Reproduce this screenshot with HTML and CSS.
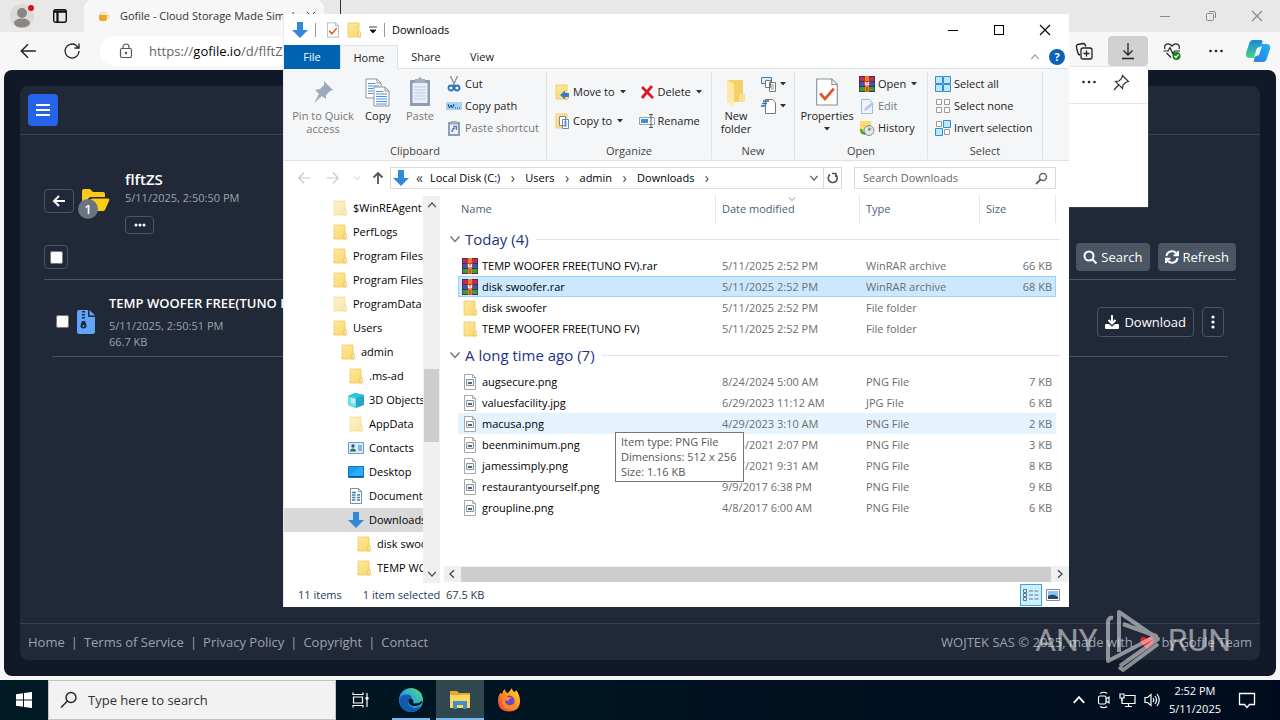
FILE: index.html
```html
<!DOCTYPE html>
<html lang="en">
<head>
<meta charset="utf-8">
<title>Gofile - Cloud Storage Made Simple</title>
<meta name="viewport" content="width=device-width, initial-scale=1">
<link rel="stylesheet" href="styles.css">
</head>
<body class="desktop">
<svg class="sprite" aria-hidden="true">
  <defs>
    <linearGradient id="g-folder" x1="0" y1="0" x2="1" y2="1"><stop offset="0" stop-color="#ffe9a2"/><stop offset="1" stop-color="#fbd566"/></linearGradient>
    <linearGradient id="g-edge" x1="0" y1="1" x2="1" y2="0"><stop offset="0" stop-color="#1464c0"/><stop offset=".5" stop-color="#2aa7dd"/><stop offset="1" stop-color="#5fdc6b"/></linearGradient>
    <linearGradient id="g-fox" x1="1" y1="0" x2="0" y2="1"><stop offset="0" stop-color="#ffe53b"/><stop offset=".5" stop-color="#ff8a1e"/><stop offset="1" stop-color="#f2304f"/></linearGradient>
    <linearGradient id="g-cop1" x1="0" y1="0" x2="0" y2="1"><stop offset="0" stop-color="#1c86dc"/><stop offset="1" stop-color="#42d68c"/></linearGradient>
    <linearGradient id="g-cop2" x1="0" y1="1" x2="1" y2="0"><stop offset="0" stop-color="#2b7de9"/><stop offset="1" stop-color="#1fb5ee"/></linearGradient>
  </defs>
  <symbol id="i-folder" viewBox="0 0 16 16"><path d="M2 1h11v8l1 1v5H2z" fill="url(#g-folder)" stroke="#ecc65c" stroke-width=".8"/><path d="M12 15v-4l1.500-1.500 .800 1V15z" fill="#fff0b8" stroke="#d9ae45" stroke-width=".6"/></symbol>
  <symbol id="i-rar" viewBox="0 0 16 16"><path fill="#c22a50" d="M0 1h16v4H0z"/><path fill="#3d55b8" d="M0 6h16v4H0z"/><path fill="#3f9b3a" d="M0 11h16v4H0z"/><path d="M0 5.500h16M0 10.500h16M0 15.500h16M0 .5h16" stroke="#4a2f45"/><path d="M.5 1v14M15.500 1v14" stroke="#2a2340" opacity=".5"/><path fill="#ee7a26" d="M6 0h4v16H6z"/><path d="M8 11v5" stroke="#8c4a1c"/><path fill="#b8433f" d="M5 5h6v5H5z"/><path d="M6.500 6v3h3V6M8 6v3" stroke="#fff" fill="none"/></symbol>
  <symbol id="i-pic" viewBox="0 0 16 16"><path d="M2.500.5h8l3 3v12h-11z" fill="#fff" stroke="#a3a8ad"/><path d="M10.500.5v3h3" fill="none" stroke="#a3a8ad"/><path d="M4.500 5.500h7v6h-7z" fill="#eef3f8" stroke="#8793a1"/><path d="M6 10V8h4v2z" fill="#52697c"/></symbol>
  <symbol id="i-down" viewBox="0 0 16 16"><path d="M5 0h6v8h5l-8 8-8-8h5z" fill="#3289dc"/></symbol>
  <symbol id="i-cube" viewBox="0 0 16 16"><path d="M0 4l7-3 9 2v10l-8 3-8-3z" fill="#27a7c7"/><path d="M0 4l8 2v10l-8-3z" fill="#6fdce9"/><path d="M0 4l7-3 9 2-8 3z" fill="#2fc3dc"/><path d="M3 6l4 1v5l-4-1z" fill="#b6f2f6"/></symbol>
  <symbol id="i-contact" viewBox="0 0 16 16"><path d="M.5 2.500h15v11H.5z" fill="#dcebf7" stroke="#6f9cc3"/><circle cx="5" cy="6" r="1.700" fill="#20557c"/><path d="M2 11.500c0-4 6-4 6 0z" fill="#276c5c"/><path d="M10 6h4M10 8h4M10 10h4" stroke="#3d82be"/></symbol>
  <symbol id="i-desk" viewBox="0 0 16 16"><path d="M.5 2.500h15v11H.5z" fill="#18a0f3" stroke="#1676bd"/><path d="M1 12.500h14" stroke="#08598f"/><path d="M1 12L12 3h3v9z" fill="#45baff" opacity=".5"/></symbol>
  <symbol id="i-doc" viewBox="0 0 16 16"><path d="M2.500.5h8l3 3v12h-11z" fill="#fff" stroke="#7f8e9c"/><path d="M10.500.5v3h3" fill="none" stroke="#7f8e9c"/><path d="M4 4.500h4M4 7h3.500M9 7h3M4 9.500h3.500M9 9.500h3M4 12h3.500M9 12h3" stroke="#3f7eb4" stroke-width="1.300"/></symbol>
  <symbol id="i-prop" viewBox="0 0 16 20"><path d="M.5.5h11l4 4v15H.5z" fill="#fff" stroke="#888f96" stroke-width=".8"/><path d="M11.500.5v4h4" fill="none" stroke="#888f96" stroke-width=".8"/><path d="M3 11l3.500 4L13 7.500" fill="none" stroke="#e3532b" stroke-width="2"/></symbol>
  <symbol id="i-caret" viewBox="0 0 6 4"><path d="M0 0h6L3 3.500z" fill="#333"/></symbol>
  <symbol id="i-chev" viewBox="0 0 12 12"><path d="M1.500 3.500L6 8.500l4.500-5" fill="none" stroke="currentColor" stroke-width="1.500"/></symbol>
  <symbol id="i-dots" viewBox="0 0 16 16"><g fill="currentColor"><circle cx="2.500" cy="8" r="1.300"/><circle cx="8" cy="8" r="1.300"/><circle cx="13.500" cy="8" r="1.300"/></g></symbol>
  <symbol id="i-close" viewBox="0 0 12 12"><path d="M1 1l10 10M11 1L1 11" stroke="currentColor" stroke-width="1.100"/></symbol>
  <symbol id="i-larrow" viewBox="0 0 16 16"><path d="M15 8H2M8 2L2 8l6 6" fill="none" stroke="currentColor" stroke-width="1.300"/></symbol>
</svg>

<main class="browser">
  <header class="tabstrip">
    <button class="plain" aria-label="Profile"><svg width="28" height="28" viewBox="0 0 28 28"><circle cx="14" cy="14" r="12" fill="#dcdad8"/><circle cx="14" cy="11" r="5" fill="#898684"/><ellipse cx="14" cy="21" rx="8" ry="4.500" fill="#898684"/><circle cx="23" cy="6" r="3" fill="#d8111e"/></svg></button>
    <button class="plain" aria-label="Tab actions"><svg width="16" height="16" viewBox="0 0 16 16"><rect x="1.700" y="1.700" width="12.600" height="12.600" rx="2" fill="none" stroke="#111" stroke-width="1.400"/><path d="M2 3.700h12M5.500 4v10" stroke="#111" stroke-width="2.200"/></svg></button>
    <div class="tab">
      <svg width="12" height="12" viewBox="0 0 12 12"><path d="M1 4h8v5q0 2-2 2H3q-2 0-2-2z" fill="#e9a927"/><path d="M1 4q0-3 4-2.500Q9 1 9 4v1H1z" fill="#f6e3c2"/><path d="M9 5h2v3H9" fill="none" stroke="#e4cfa4"/></svg>
      <span class="tab-title">Gofile - Cloud Storage Made Simple</span>
      <button class="plain" aria-label="Close tab"><svg width="10" height="10"><use href="#i-close"/></svg></button>
    </div>
    <span class="tab-end"></span>
    <div class="controls muted">
      <button class="plain" aria-label="Minimize"><svg width="12" height="12"><path d="M1 6.500h10" stroke="currentColor"/></svg></button>
      <button class="plain" aria-label="Restore"><svg width="12" height="12" fill="none" stroke="currentColor"><rect x="1.500" y="3.500" width="7" height="7" rx="1"/><path d="M4 1.500h5q1.500 0 1.500 1.500v5"/></svg></button>
      <button class="plain" aria-label="Close"><svg width="12" height="12"><use href="#i-close"/></svg></button>
    </div>
  </header>
  <div class="toolbar">
    <button class="plain tool" aria-label="Back"><svg width="18" height="18"><use href="#i-larrow"/></svg></button>
    <button class="plain tool" aria-label="Refresh"><svg width="18" height="18" viewBox="0 0 18 18" fill="none" stroke="#222" stroke-width="1.300"><path d="M16 9a7 7 0 1 1-3-5.700L16 6"/><path d="M16 1.500V6h-4.500"/></svg></button>
    <div class="url">
      <svg width="14" height="16" viewBox="0 0 14 16" fill="none" stroke="#555" stroke-width="1.200"><rect x="1.500" y="5.500" width="11" height="9" rx="1.500"/><path d="M4 5.500V4a3 3 0 0 1 6 0v1.500"/><circle cx="7" cy="10" r=".6"/></svg>
      <span>https://<b>gofile.io</b>/d/flftZS</span>
    </div>
    <button class="plain tool" aria-label="Collections"><svg width="18" height="18" viewBox="0 0 18 18" fill="none" stroke="#222" stroke-width="1.300"><path d="M5 13q-2-.5-2.500-3L1.500 5Q1 3 3 2.500L8 1.500q2 0 3 3"/><rect x="6" y="6" width="11" height="11" rx="2"/><path d="M11.500 8.500v6M8.500 11.500h6"/></svg></button>
    <button class="plain tool tool-on" aria-label="Downloads"><svg width="18" height="18" viewBox="0 0 18 18" fill="none" stroke="#222" stroke-width="1.300"><path d="M9 1v12M4.500 8.500L9 13l4.500-4.500M3 16.500h12"/></svg></button>
    <button class="plain tool" aria-label="Browser essentials"><svg width="18" height="18" viewBox="0 0 18 18" fill="none" stroke="#222" stroke-width="1.200"><path d="M2 7q-1-3 1-4.500Q6 .5 9 4q3-3.500 6-1.500 2 1.500 1 4.500M3.500 11L8 15.500M.5 9H5l2-3.500L10 12l1.500-3H17"/><circle cx="13.500" cy="14" r="4" fill="#18801c" stroke="none"/><path d="M11.500 14l1.500 1.500 2.500-3" stroke="#fff"/></svg></button>
    <button class="plain tool" aria-label="Settings and more"><svg width="16" height="16"><use href="#i-dots"/></svg></button>
    <button class="plain tool" aria-label="Copilot"><svg width="26" height="26" viewBox="0 0 26 26"><path d="M8 2h8q2 0 1.500 2L13 17q-1 3-4 3H5q-5 0-4-5l3-9q1-4 4-4z" fill="url(#g-cop1)"/><path d="M18 24h-8q-2 0-1-2l4-13q1-3 4-3h4q5 0 4 5l-3 9q-1 4-4 4z" fill="url(#g-cop2)"/><path d="M12 10l5-2-3 9-5 2z" fill="#f7f7f7"/></svg></button>
  </div>

  <div class="page">
    <div class="card">
      <div class="card-top"><button class="menu-btn" aria-label="Menu"><svg width="14" height="14" viewBox="0 0 14 14"><path d="M0 2h14M0 7h14M0 12h14" stroke="#fff" stroke-width="2"/></svg></button></div>
      <section class="content">
        <div class="folder-head">
          <button class="ghost back" aria-label="Back"><svg width="14" height="14" viewBox="0 0 14 14" fill="none" stroke="#fff" stroke-width="2"><path d="M13 7H2M7 2L2 7l5 5"/></svg></button>
          <div class="folder-icon"><svg width="28" height="24" viewBox="0 0 28 24"><path d="M0 20V2q0-2 2-2h6l3 3h10q2 0 2 2v3H9q-2 0-3 2z" fill="#facc15"/><path d="M3 22L8 11q.5-1.500 2-1.500h16q2 0 1.200 2l-4 9q-.7 1.500-2.200 1.500z" fill="#facc15"/></svg><span class="count">1</span></div>
          <div class="folder-meta">
            <h1>flftZS</h1>
            <p>5/11/2025, 2:50:50 PM</p>
            <button class="ghost more" aria-label="More"><svg width="12" height="12" viewBox="0 0 12 12" fill="#fff"><circle cx="2" cy="6" r="1.500"/><circle cx="6" cy="6" r="1.500"/><circle cx="10" cy="6" r="1.500"/></svg></button>
          </div>
        </div>
        <div class="actions">
          <label class="ghost pick"><input type="checkbox" aria-label="Select all items"></label>
          <div class="right">
            <button class="solid"><svg width="14" height="14" viewBox="0 0 14 14" fill="none" stroke="#fff" stroke-width="2"><circle cx="6" cy="6" r="4.500"/><path d="M9 9l4.500 4.500"/></svg>Search</button>
            <button class="solid"><svg width="14" height="14" viewBox="0 0 14 14" fill="none" stroke="#fff" stroke-width="2"><path d="M1.500 6A5.500 5.500 0 0 1 11 3l1.500 1.500M12.500 8A5.500 5.500 0 0 1 3 11L1.500 9.500M13 1v4.200H8.500M1 13V8.800h4.500"/></svg>Refresh</button>
          </div>
        </div>
        <div class="item">
          <input type="checkbox" aria-label="Select file">
          <svg width="18" height="24" viewBox="0 0 18 24"><path d="M2 0h9v6q0 1 1 1h6v15q0 2-2 2H2q-2 0-2-2V2q0-2 2-2zM12.500 0L18 5.500h-5.500z" fill="#60a5fa"/><path d="M6.500 1v9" stroke="#1f2937" stroke-width="3" stroke-dasharray="1.500 1.500"/><path d="M5 11h3l1.500 4.500a3 3 0 0 1-6 0z" fill="#1f2937"/><circle cx="6.500" cy="16" r="1" fill="#60a5fa"/></svg>
          <div class="item-text"><h2>TEMP WOOFER FREE(TUNO FV).rar</h2><p>5/11/2025, 2:50:51 PM</p><p>66.7 KB</p></div>
          <button class="ghost dl"><svg width="14" height="14" viewBox="0 0 14 14"><path d="M7 0v8M3.500 5L7 8.500 10.500 5" fill="none" stroke="#fff" stroke-width="2"/><path d="M1 9h3l3 2.500L10 9h3q1 0 1 1v3q0 1-1 1H1q-1 0-1-1v-3q0-1 1-1z" fill="#fff"/></svg>Download</button>
          <button class="ghost kebab" aria-label="Item menu"><svg width="4" height="14" viewBox="0 0 4 14" fill="#fff"><circle cx="2" cy="2" r="1.600"/><circle cx="2" cy="7" r="1.600"/><circle cx="2" cy="12" r="1.600"/></svg></button>
        </div>
      </section>
      <footer class="foot">
        <nav><a href="#">Home</a><a href="#">Terms of Service</a><a href="#">Privacy Policy</a><a href="#">Copyright</a><a href="#">Contact</a></nav>
        <span class="made">WOJTEK SAS © 2025, made with <svg width="16" height="13" viewBox="0 0 14 13"><path d="M7 13L1 7Q-.5 5 .5 2.500 3-1 7 3q4-4 6.500-.5 1 2.500-.5 4.500z" fill="#e0242f"/></svg> by Gofile Team</span>
      </footer>
    </div>
  </div>
</main>

<aside class="dl-popup"><div class="dl-bar">
  <button class="plain" aria-label="More options"><svg width="16" height="16"><use href="#i-dots"/></svg></button>
  <button class="plain" aria-label="Pin"><svg width="17" height="17" viewBox="0 0 17 17" fill="none" stroke="#333" stroke-width="1.200"><path d="M9.500 1.500l6 6-3 1-2.500 2.500-.5 3.500-7-7L6 7l2.500-2.500zM5.500 11L1 16"/></svg></button>
</div></aside>

<section class="explorer">
  <header class="ex-title">
    <svg width="16" height="16"><use href="#i-down"/></svg><i class="tick"></i>
    <svg class="q1" width="12" height="16"><use href="#i-prop"/></svg>
    <svg width="16" height="16"><use href="#i-folder"/></svg>
    <svg width="8" height="8" viewBox="0 0 8 8"><path d="M0 1h8M1 4h6L4 7z" stroke="#111" fill="#111" stroke-width=".8"/></svg><i class="tick"></i>
    <span>Downloads</span>
    <div class="controls">
      <button class="plain" aria-label="Minimize"><svg width="12" height="12"><path d="M1 6.500h10" stroke="currentColor"/></svg></button>
      <button class="plain" aria-label="Maximize"><svg width="12" height="12"><rect x="1.500" y="1.500" width="9" height="9" fill="none" stroke="currentColor"/></svg></button>
      <button class="plain" aria-label="Close"><svg width="12" height="12"><use href="#i-close"/></svg></button>
    </div>
  </header>
  <nav class="ex-tabs">
    <button class="file">File</button><button class="on">Home</button><button>Share</button><button>View</button>
    <span class="help"><svg class="flip" width="10" height="10"><use href="#i-chev"/></svg><span class="q">?</span></span>
  </nav>
  <div class="ribbon">
    <div class="group g-clip">
      <div class="tools">
        <button class="big off pinq"><svg width="30" height="32" viewBox="0 0 30 32"><path d="M16 5l9 9-3 1-4 4 0 4-4-3-8 7 5-9-4-4 5-1 4-4z" fill="#9daabb"/></svg>Pin to Quick access</button>
        <button class="big copy"><svg width="26" height="32" viewBox="0 0 26 32"><g fill="#fff" stroke="#858b92" stroke-width=".9"><path d="M1 3h11l4 4v15H1zM12 3v4h4"/><path d="M9 11h11l4 4v15H9zM20 11v4h4"/></g><path d="M3 7.500h7M3 10h11M3 12.500h5M3 15h5M3 17.500h5M11 15.500h7M11 18h11M11 20.500h11M11 23h11M11 25.500h11M11 28h11" stroke="#4b92dc"/></svg>Copy</button>
        <button class="big off paste"><svg width="24" height="32" viewBox="0 0 24 32"><path d="M2 4h20v26H2z" fill="#8e9cb8"/><path d="M4.500 7h15v20h-15z" fill="#e8eef8"/><path d="M7 3h3q2-4 4 0h3v4H7z" fill="#a7afbb"/><path d="M6 11h12M6 14h12M6 17h12M6 20h12M6 23h12" stroke="#c2cde2"/></svg>Paste</button>
        <div class="stack">
          <button><svg width="16" height="16" viewBox="0 0 16 16" fill="none"><path d="M4.500 0L9 10M11.500 0L7 10" stroke="#8a8f95" stroke-width="1.300"/><g stroke="#2578be" stroke-width="1.800"><circle cx="5" cy="12" r="2.500"/><circle cx="11" cy="12" r="2.500"/></g></svg>Cut</button>
          <button><svg width="16" height="16" viewBox="0 0 16 16"><path d="M0 4h16v8H0z" fill="#a6d2f5"/><path d="M2 6l1.500 4L5 7l1.500 3L8 6M9 10h1M11 10h1M13 10h1" fill="none" stroke="#174a79"/></svg>Copy path</button>
          <button class="off"><svg width="16" height="16" viewBox="0 0 16 16"><path d="M2 2h12v14H2z" fill="#8e9cb8"/><path d="M4 4.500h8v9.500H4z" fill="#eef3fb"/><path d="M5 1h6v3H5z" fill="#a7afbb"/><path d="M6 12q0-3 3-4M7 6.500h3.500V10" fill="none" stroke="#5e7eb4" stroke-width="1.500"/></svg>Paste shortcut</button>
        </div>
      </div><span class="cap">Clipboard</span>
    </div>
    <div class="group g-org">
      <div class="tools two">
        <div class="stack">
          <button><svg width="16" height="16"><use href="#i-folder"/><path d="M15 9h-4V6.500L6 11l5 4.500V13h4z" fill="#3180c8"/></svg>Move to<svg class="car" width="6" height="4"><use href="#i-caret"/></svg></button>
          <button><svg width="16" height="16"><use href="#i-folder"/><path d="M5.500 3.500h6v9h-6zM8.500 6.500h6v9h-6z" fill="#fff" stroke="#6e88a6"/><path d="M10 9h3M10 11h3M10 13h3" stroke="#4b92dc"/></svg>Copy to<svg class="car" width="6" height="4"><use href="#i-caret"/></svg></button>
        </div>
        <div class="stack line">
          <button><svg width="16" height="16" viewBox="0 0 16 16"><path d="M3 3l11 11M13 2L3 14" stroke="#d81b24" stroke-width="2.800"/></svg>Delete<svg class="car" width="6" height="4"><use href="#i-caret"/></svg></button>
          <button><svg width="16" height="16" viewBox="0 0 16 16" fill="none"><path d="M.5 4.500h15v7H.5z" fill="#fff" stroke="#8ea2b7"/><path d="M2 6h7v4H2z" fill="#3b8ede"/><path d="M10 1.500h4M10 14.500h4M12 2v12" stroke="#555"/></svg>Rename</button>
        </div>
      </div><span class="cap">Organize</span>
    </div>
    <div class="group g-new">
      <div class="tools">
        <button class="big newf"><svg width="24" height="32" viewBox="0 0 24 32"><path d="M3 4h16v22H3z" fill="#f6cf68"/><path d="M3 4l7 4v22l-7-4z" fill="#ffe9a5"/><path d="M15 18h6v8h-6z" fill="#ffdf87"/></svg>New folder</button>
        <div class="stack">
          <button aria-label="New item"><svg width="16" height="16" viewBox="0 0 16 16"><path d="M.5 1.500h10v6H.5z" fill="#d8ecf6" stroke="#3f82a5"/><path d="M4.500 4.500h5v7h-5zM8.500 6.500h6v9h-6z" fill="#fff" stroke="#777"/><path d="M10 9h3M10 11h3M10 13h3" stroke="#999"/></svg><svg width="6" height="4"><use href="#i-caret"/></svg></button>
          <button aria-label="Easy access"><svg width="16" height="16" viewBox="0 0 16 16"><path d="M4.500 1.500h7l3 3v11h-10z" fill="#fff" stroke="#777"/><path d="M2 3h6M1 5.500h5M0 8h4" stroke="#2670ad" stroke-width="1.300"/></svg><svg width="6" height="4"><use href="#i-caret"/></svg></button>
        </div>
      </div><span class="cap">New</span>
    </div>
    <div class="group g-open">
      <div class="tools">
        <button class="big props"><svg width="24" height="32" viewBox="0 0 24 32"><use href="#i-prop" x="1" y="2" width="22" height="28"/></svg>Properties<svg width="6" height="4"><use href="#i-caret"/></svg></button>
        <div class="stack">
          <button><svg width="16" height="16"><use href="#i-rar"/></svg>Open<svg class="car" width="6" height="4"><use href="#i-caret"/></svg></button>
          <button class="off"><svg width="16" height="16" viewBox="0 0 16 16"><path d="M2.500 1.500h8l3 3v11h-11z" fill="#edf3fc" stroke="#a8b8d2"/><path d="M5 13l1-3 7-6 2 2-7 6z" fill="#b8c9e6"/></svg>Edit</button>
          <button><svg width="16" height="16" viewBox="0 0 16 16"><path d="M1 1h11v13H1z" fill="#ffd96d"/><circle cx="10" cy="10.500" r="5" fill="#dfe6e4" stroke="#7f8b8b"/><path d="M10 7.500v3l2-2" fill="none" stroke="#456"/><path d="M1 9h2q1 4 4 4l-1 2q-5-1-5-6z" fill="#28a545"/></svg>History</button>
        </div>
      </div><span class="cap">Open</span>
    </div>
    <div class="group g-sel">
      <div class="tools">
        <div class="stack">
          <button><svg width="16" height="16" viewBox="0 0 16 16" fill="#bfe4fd" stroke="#2f8fd3"><path d="M.5.5h7v7h-7zM8.500.5h7v7h-7zM.5 8.500h7v7h-7zM8.500 8.500h7v7h-7z"/></svg>Select all</button>
          <button><svg width="16" height="16" viewBox="0 0 16 16" fill="#fff" stroke="#999"><path d="M1.500 1.500h5v5h-5zM9.500 1.500h5v5h-5zM1.500 9.500h5v5h-5zM9.500 9.500h5v5h-5z"/></svg>Select none</button>
          <button><svg width="16" height="16" viewBox="0 0 16 16"><path d="M1.500 1.500h5v5h-5zM9.500 9.500h5v5h-5z" fill="#fff" stroke="#999"/><path d="M8.500.5h7v7h-7zM.5 8.500h7v7h-7z" fill="#bfe4fd" stroke="#2f8fd3"/></svg>Invert selection</button>
        </div>
      </div><span class="cap">Select</span>
    </div>
  </div>

  <div class="addr">
    <button class="plain nav-b dim" aria-label="Back"><svg width="14" height="14"><use href="#i-larrow"/></svg></button>
    <button class="plain nav-b dim" aria-label="Forward"><svg class="mirror" width="14" height="14"><use href="#i-larrow"/></svg></button>
    <button class="plain nav-c dim" aria-label="Recent"><svg width="8" height="8"><use href="#i-chev"/></svg></button>
    <button class="plain nav-u" aria-label="Up"><svg width="14" height="14" viewBox="0 0 14 14" fill="none" stroke="#555" stroke-width="1.800"><path d="M7 13V2M2.500 6.500L7 2l4.500 4.500"/></svg></button>
    <div class="crumbs"><svg width="16" height="16"><use href="#i-down"/></svg><i class="sep">«</i><a href="#">Local Disk (C:)</a><i>›</i><a href="#">Users</a><i>›</i><a href="#">admin</a><i>›</i><a href="#">Downloads</a><i>›</i>
      <button class="plain drop" aria-label="Previous locations"><svg width="10" height="10" color="#555"><use href="#i-chev"/></svg></button>
      <button class="plain reload" aria-label="Refresh"><svg width="12" height="12" viewBox="0 0 12 12" fill="none" stroke="#555" stroke-width="1.600"><path d="M3 2.500a4.500 4.500 0 1 0 5.500 0M5 1.500h3.800V5"/></svg></button>
    </div>
    <label class="find"><input type="text" placeholder="Search Downloads" aria-label="Search Downloads"><svg width="13" height="13" viewBox="0 0 13 13" fill="none" stroke="#666" stroke-width="1.500"><circle cx="8" cy="5" r="3.500"/><path d="M5.500 7.500L1 12" stroke-width="2"/></svg></label>
  </div>

  <div class="ex-body">
    <div class="tree">
      <ul>
        <li class="faint"><svg width="16" height="16"><use href="#i-folder"/></svg>$WinREAgent</li>
        <li><svg width="16" height="16"><use href="#i-folder"/></svg>PerfLogs</li>
        <li><svg width="16" height="16"><use href="#i-folder"/></svg>Program Files</li>
        <li><svg width="16" height="16"><use href="#i-folder"/></svg>Program Files (x86)</li>
        <li class="faint"><svg width="16" height="16"><use href="#i-folder"/></svg>ProgramData</li>
        <li><svg width="16" height="16"><use href="#i-folder"/></svg>Users</li>
        <li class="l1"><svg width="16" height="16"><use href="#i-folder"/></svg>admin</li>
        <li class="l2"><svg width="16" height="16"><use href="#i-folder"/></svg>.ms-ad</li>
        <li class="l2"><svg width="16" height="16"><use href="#i-cube"/></svg>3D Objects</li>
        <li class="l2 faint"><svg width="16" height="16"><use href="#i-folder"/></svg>AppData</li>
        <li class="l2"><svg width="16" height="16"><use href="#i-contact"/></svg>Contacts</li>
        <li class="l2"><svg width="16" height="16"><use href="#i-desk"/></svg>Desktop</li>
        <li class="l2"><svg width="16" height="16"><use href="#i-doc"/></svg>Documents</li>
        <li class="l2 cur"><svg width="16" height="16"><use href="#i-down"/></svg>Downloads</li>
        <li class="l3"><svg width="16" height="16"><use href="#i-folder"/></svg>disk swoofer</li>
        <li class="l3"><svg width="16" height="16"><use href="#i-folder"/></svg>TEMP WOOFER</li>
      </ul>
      <div class="vbar"><svg class="flip" width="10" height="10"><use href="#i-chev"/></svg><i class="before"></i><i class="thumb"></i><i class="after"></i><svg width="10" height="10"><use href="#i-chev"/></svg></div>
    </div>
    <div class="files">
      <div class="list">
      <table>
        <colgroup><col><col class="c-date"><col class="c-type"><col class="c-size"></colgroup>
        <thead><tr><th>Name</th><th class="sorted">Date modified<svg width="8" height="8"><use href="#i-chev"/></svg></th><th>Type</th><th>Size</th></tr></thead>
        <tbody>
          <tr class="grp"><th colspan="4"><div><svg width="12" height="12"><use href="#i-chev"/></svg>Today (4)</div></th></tr>
          <tr><td><span><svg width="16" height="16"><use href="#i-rar"/></svg>TEMP WOOFER FREE(TUNO FV).rar</span></td><td>5/11/2025 2:52 PM</td><td>WinRAR archive</td><td>66 KB</td></tr>
          <tr class="sel"><td><span><svg width="16" height="16"><use href="#i-rar"/></svg>disk swoofer.rar</span></td><td>5/11/2025 2:52 PM</td><td>WinRAR archive</td><td>68 KB</td></tr>
          <tr><td><span><svg width="16" height="16"><use href="#i-folder"/></svg>disk swoofer</span></td><td>5/11/2025 2:52 PM</td><td>File folder</td><td></td></tr>
          <tr><td><span><svg width="16" height="16"><use href="#i-folder"/></svg>TEMP WOOFER FREE(TUNO FV)</span></td><td>5/11/2025 2:52 PM</td><td>File folder</td><td></td></tr>
          <tr class="grp"><th colspan="4"><div><svg width="12" height="12"><use href="#i-chev"/></svg>A long time ago (7)</div></th></tr>
          <tr><td><span><svg width="16" height="16"><use href="#i-pic"/></svg>augsecure.png</span></td><td>8/24/2024 5:00 AM</td><td>PNG File</td><td>7 KB</td></tr>
          <tr><td><span><svg width="16" height="16"><use href="#i-pic"/></svg>valuesfacility.jpg</span></td><td>6/29/2023 11:12 AM</td><td>JPG File</td><td>6 KB</td></tr>
          <tr class="hov"><td><span><svg width="16" height="16"><use href="#i-pic"/></svg>macusa.png</span><div class="tip" role="tooltip">Item type: PNG File<br>Dimensions: 512 x 256<br>Size: 1.16 KB</div></td><td>4/29/2023 3:10 AM</td><td>PNG File</td><td>2 KB</td></tr>
          <tr><td><span><svg width="16" height="16"><use href="#i-pic"/></svg>beenminimum.png</span></td><td>7/13/2021 2:07 PM</td><td>PNG File</td><td>3 KB</td></tr>
          <tr><td><span><svg width="16" height="16"><use href="#i-pic"/></svg>jamessimply.png</span></td><td>6/17/2021 9:31 AM</td><td>PNG File</td><td>8 KB</td></tr>
          <tr><td><span><svg width="16" height="16"><use href="#i-pic"/></svg>restaurantyourself.png</span></td><td>9/9/2017 6:38 PM</td><td>PNG File</td><td>9 KB</td></tr>
          <tr><td><span><svg width="16" height="16"><use href="#i-pic"/></svg>groupline.png</span></td><td>4/8/2017 6:00 AM</td><td>PNG File</td><td>6 KB</td></tr>
        </tbody>
      </table>
      </div>
      <div class="hbar"><svg class="left" width="10" height="10"><use href="#i-chev"/></svg><i></i><svg class="rightw" width="10" height="10"><use href="#i-chev"/></svg></div>
    </div>
  </div>
  <footer class="status"><span>11 items</span><span>1 item selected&nbsp; 67.5 KB</span>
    <div class="views">
      <button class="plain von" aria-label="Details view"><svg width="16" height="14" viewBox="0 0 16 14" fill="none" stroke="#56788a"><path d="M.5 1.500h3v3h-3zM.5 5.500h3v3h-3zM.5 9.500h3v3h-3z"/><path d="M6 3h4M11.500 3h4M6 7h4M11.500 7h4M6 11h4M11.500 11h4" /></svg></button>
      <button class="plain" aria-label="Large icons view"><svg width="14" height="12" viewBox="0 0 14 12"><path d="M.5.500h13v11H.5z" fill="#fff" stroke="#889"/><path d="M2 2h10v8H2z" fill="#8cc4ef"/><path d="M2 10V7q5-3 10 1v2z" fill="#22486e"/></svg></button>
    </div>
  </footer>
</section>

<div class="mark" aria-hidden="true"><span>ANY</span><svg width="56" height="64" viewBox="0 0 56 64" fill="none" stroke="#fff" stroke-width="4" stroke-linejoin="round"><path d="M14 44V4l39 27-38 27"/><path d="M8 10q-5-1-5 5v38l48-25L18 16"/><path d="M14 59l4 3 35-26"/></svg><span>RUN</span></div>

<footer class="taskbar">
  <button class="plain start" aria-label="Start"><svg width="16" height="16" viewBox="0 0 16 16" fill="#fff"><path d="M0 2.200l7-1v6.400H0zM8 1.100L16 0v7.600H8zM0 8.500h7v6.300l-7-1zM8 8.500h8V16l-8-1.100z"/></svg></button>
  <label class="tb-search"><svg width="18" height="18" viewBox="0 0 18 18" fill="none" stroke="#222" stroke-width="1.400"><circle cx="11" cy="6.500" r="5"/><path d="M7.500 10L1 16.500"/></svg><input type="text" placeholder="Type here to search" aria-label="Type here to search"></label>
  <button class="plain app task" aria-label="Task view"><svg width="18" height="16" viewBox="0 0 18 16" fill="none" stroke="#fff" stroke-width="1.200"><path d="M1 .5v2h10v-2M1 15.500v-2h10v2M1.500 5h9v6h-9zM15 1v14"/><path d="M13.500 5h3v2.500h-3z" fill="#fff" stroke="none"/></svg></button>
  <button class="plain app edge" aria-label="Microsoft Edge"><svg width="26" height="26" viewBox="0 0 26 26"><circle cx="13" cy="13" r="12" fill="url(#g-edge)"/><path d="M1.500 14Q1 8 8 7.500q6 0 6 5-2-1-3.500 1-1.500 3 2 6 4 3 10.500-.5-4 6.500-11 6Q3 24 1.500 14z" fill="#1359ad"/><path d="M14 12q-2.500-1-3.500 1.500-.5 3 3 5 4 1.500 9-1 2-2 1.500-4-2 3-7 3-3-.5-1.500-2.500z" fill="#001a24"/></svg></button>
  <button class="plain app here" aria-label="File Explorer"><svg width="22" height="20" viewBox="0 0 22 20"><path d="M1 1h7l2 2h11v15H1z" fill="#e9a92c"/><path d="M1 5h20v13H1z" fill="#ffd75e"/><path d="M4 19v-8h14v8h-4v-4H8v4z" fill="#3b92c8"/></svg></button>
  <button class="plain app" aria-label="Firefox"><svg width="24" height="24" viewBox="0 0 24 24"><path d="M3 5q1 0 2 1 1-4 3-5 0 3 3 4l4-5q0 3 3 4l1-2q4 5 4 11 0 10-11 10.500Q1 23 1 13q0-5 2-8z" fill="url(#g-fox)"/><circle cx="12" cy="13" r="5.500" fill="#7044cf"/><path d="M5 8q4-1 6 1l4 1q-4 1-3 3-3 0-4-1 0 6 6 5 5-1 4-6 3 7-3 9.500-8 2-10-5z" fill="#ff8a25"/></svg></button>
  <div class="tray">
    <button class="plain" aria-label="Show hidden icons"><svg class="flip" width="14" height="14"><use href="#i-chev"/></svg></button>
    <button class="plain" aria-label="Meet now"><svg width="14" height="18" viewBox="0 0 14 18" fill="none" stroke="#fff" stroke-width="1.200"><rect x="1.500" y="5" width="7.500" height="8" rx="1.500"/><path d="M9 8l3-2v6l-3-2M3 2.500q4-2.500 7 0M3 15.500q4 2.500 7 0"/></svg></button>
    <button class="plain" aria-label="Network"><svg width="17" height="16" viewBox="0 0 17 16" fill="none" stroke="#fff" stroke-width="1.200"><path d="M6 3.500h10v8H3V7M9.500 12v2.500M6 14.500h7"/><path d="M1 2h4v4H1zM3 6v3"/></svg></button>
    <button class="plain" aria-label="Volume"><svg width="17" height="16" viewBox="0 0 17 16" fill="none" stroke="#fff" stroke-width="1.200"><path d="M1 5.500h2.500L7 2.500v11l-3.500-3H1zM9 6q1.500 2 0 4M11 4q3 4 0 8M13 2q4.500 6 0 12"/></svg></button>
    <time>2:52 PM<br>5/11/2025</time>
    <button class="plain note" aria-label="Notifications"><svg width="18" height="17" viewBox="0 0 18 17" fill="none" stroke="#fff" stroke-width="1.300"><path d="M1.500 1.500h15v11h-5L9 15.500l-2.500-3h-5z"/></svg></button>
  </div>
</footer>
</body>
</html>
```
FILE: styles.css
```css
* { box-sizing: border-box; }
.desktop { margin: 0; min-height: 100vh; display: flex; flex-direction: column; position: relative; overflow: hidden; background: #f7f7f7; font: 11px/16px "Open Sans", "Noto Sans", sans-serif; color: #222; }
.sprite { position: absolute; width: 0; height: 0; }
button, input { font: inherit; color: inherit; }
button { padding: 0; border: 0; background: none; }
a { color: inherit; text-decoration: none; }
svg { flex: none; display: block; }
h1, h2, p, ul { margin: 0; padding: 0; }
i { font-style: normal; }
.plain { display: flex; align-items: center; justify-content: center; }
.flip { transform: rotate(180deg); }
.mirror { transform: rotate(180deg); }
.left { transform: rotate(90deg); }
.rightw { transform: rotate(-90deg); }

/* browser chrome */
.browser { flex: 1; display: flex; flex-direction: column; }
.tabstrip { display: flex; align-items: center; height: 32px; padding-left: 8px; background: #e8e8e8; }
.tabstrip > .plain { width: 28px; height: 32px; margin-right: 10px; }
.tab { align-self: stretch; width: 240px; display: flex; align-items: center; gap: 10px; padding: 0 8px 0 14px; background: #f7f7f7; border-radius: 8px 8px 0 0; }
.tab-title { flex: 1; min-width: 0; overflow: hidden; white-space: nowrap; color: #333; }
.tab-end { width: 1px; height: 100%; margin-left: 16px; background: #333; }
.controls { margin-left: auto; display: flex; align-self: stretch; }
.controls button { width: 46px; }
.muted { color: #888; }
.toolbar { display: flex; align-items: center; height: 38px; padding: 0 2px 0 6px; }
.tool { width: 44px; height: 30px; color: #222; }
.tool-on { width: 40px; margin: 0 2px; background: #d0d0d0; border-radius: 4px; }
.tool:last-child { width: 40px; }
.url { flex: 1; height: 30px; margin: 0 18px 0 6px; padding-left: 19px; display: flex; align-items: center; gap: 16px; background: #fff; border-radius: 15px; font-size: 13px; color: #666; }
.url b { font-weight: 400; color: #000; }

/* gofile page */
.page { flex: 1; margin: 0 4px 4px; padding: 16px; display: flex; background: #111827; border-radius: 8px; }
.card { flex: 1; display: flex; flex-direction: column; background: #212837; border-radius: 8px; color: #fff; font-size: 13px; }
.card-top { padding: 8px; border-bottom: 1px solid #374151; }
.menu-btn { display: flex; align-items: center; justify-content: center; width: 30px; height: 32px; background: #2563eb; border-radius: 4px; }
.content { flex: 1; padding: 33px 24px; }
.ghost { display: flex; align-items: center; justify-content: center; gap: 5px; border: 1px solid #4b5563; border-radius: 4px; }
.back { width: 30px; height: 24px; }
.folder-head { display: flex; align-items: center; }
.folder-icon { position: relative; margin: 0 15px 0 8px; }
.count { position: absolute; left: -4px; top: 10px; width: 20px; height: 20px; border-radius: 10px; background: #6b7280; text-align: center; font-size: 13px; line-height: 20px; font-weight: 600; }
.folder-meta h1 { font-size: 15px; line-height: 22px; font-weight: 600; }
.folder-meta p, .item-text p { font-size: 11px; line-height: 16px; color: #9ca3af; }
.more { width: 29px; height: 18px; margin-top: 10px; }
.actions { display: flex; align-items: center; justify-content: space-between; padding: 9px 0 8px; border-bottom: 1px solid #4b5563; }
.pick { width: 24px; height: 24px; }
.card input { width: 13px; height: 13px; margin: 0; }
.right { display: flex; gap: 8px; }
.solid { display: flex; align-items: center; justify-content: center; gap: 4px; height: 28px; padding: 0 7px; background: #4b5563; border-radius: 4px; }
.item { margin: 8px 8px 0; padding: 5px 4px 6px; display: flex; align-items: center; border-bottom: 1px solid #4b5563; }
.item > svg { margin: 0 14px 0 8px; }
.item-text { flex: 1; }
.item-text h2 { font-size: 13px; line-height: 20px; font-weight: 600; margin-bottom: 5px; }
.dl { height: 30px; padding: 0 7px; }
.kebab { width: 22px; height: 30px; margin-left: 8px; }
.foot { display: flex; align-items: center; justify-content: space-between; height: 37px; padding: 0 8px; border-top: 1px solid #374151; color: #9ca3af; }
.foot a + a::before { content: "|"; margin: 0 6px; }
.made svg { display: inline-block; vertical-align: -2px; margin: 0 3px; }

.dl-popup { position: absolute; right: 132px; top: 67px; width: 300px; height: 140px; background: #fff; box-shadow: 0 0 1px #999; }
.dl-bar { display: flex; justify-content: flex-end; align-items: center; gap: 16px; height: 37px; padding: 0 18px 6px; border-bottom: 1px solid #e5e5e5; }

/* explorer window */
.explorer { position: absolute; left: 283px; right: 211px; top: 14px; bottom: 113px; display: flex; flex-direction: column; background: #fff; border-left: 1px solid #e8edf3; }
.ex-title { display: flex; align-items: center; height: 31px; padding: 0 1px 0 8px; gap: 7px; color: #000; }
.tick { width: 1px; height: 14px; background: #999; }
.q1 { margin-left: 4px; }
.ex-tabs { display: flex; height: 24px; border-bottom: 1px solid #dfe1e3; }
.ex-tabs button { width: 56px; height: 24px; }
.ex-tabs .file { background: #0063b1; color: #fff; }
.ex-tabs .on { width: 58px; background: #f5f6f7; border: 1px solid #dfe1e3; border-bottom: 0; }
.help { margin-left: auto; padding-right: 4px; display: flex; align-items: center; gap: 9px; color: #999; }
.q { width: 16px; height: 16px; border-radius: 8px; background: #0b62b8; color: #fff; text-align: center; font-weight: 700; }
.ribbon { display: flex; height: 92px; padding-top: 3px; background: #f5f6f7; border-bottom: 1px solid #dfe1e3; }
.group { display: flex; flex-direction: column; margin-bottom: 1px; border-right: 1px solid #e0e2e4; }
.tools { display: flex; flex: 1; }
.cap { text-align: center; color: #444; }
.g-clip { width: 263px; }
.g-org { width: 165px; }
.g-new { width: 83px; }
.g-open { width: 133px; }
.g-sel { width: 115px; }
.big { display: flex; flex-direction: column; align-items: center; padding-top: 4px; line-height: 13px; gap: 1px; align-self: flex-start; }
.big svg + svg { margin-top: 4px; }
.off { color: #777; }
.pinq { width: 78px; padding: 4px 6px 0; }
.copy { width: 32px; }
.paste { width: 52px; }
.newf { width: 36px; margin: 0 7px 0 6px; }
.props { width: 60px; margin-left: 2px; }
.stack { display: flex; flex-direction: column; padding-top: 1px; }
.stack button { display: flex; align-items: center; gap: 3px; height: 22px; white-space: nowrap; }
.car { margin-left: 2px; }
.g-sel .stack { padding-left: 7px; }
.g-open .stack { padding-left: 2px; }
.g-org .stack { padding: 9px 0 0 7px; gap: 7px; }
.g-org .line { margin-left: 5px; padding-left: 8px; }

.addr { display: flex; align-items: center; height: 34px; padding: 0 13px 0 5px; }
.nav-b { width: 29px; color: #777; }
.nav-c { width: 20px; color: #777; }
.nav-u { width: 22px; }
.dim { opacity: .4; }
.crumbs { flex: 1; display: flex; align-items: center; height: 22px; margin-left: 1px; padding-left: 2px; border: 1px solid #d9d9d9; color: #000; white-space: nowrap; }
.crumbs i { width: 25px; text-align: center; color: #444; font-size: 14px; line-height: 16px; }
.crumbs .sep { width: 21px; }
.drop { margin-left: auto; width: 18px; }
.reload { width: 18px; height: 20px; border-left: 1px solid #d9d9d9; }
.find { display: flex; align-items: center; width: 202px; height: 22px; margin-left: 12px; padding: 0 7px 0 8px; border: 1px solid #d9d9d9; }
.find input { flex: 1; min-width: 0; padding: 0; border: 0; background: none; }
.find input::placeholder { color: #666; opacity: 1; }

.ex-body { flex: 1; min-height: 0; display: flex; }
.tree { width: 156px; padding-top: 1px; display: flex; }
.tree ul { flex: 1; min-width: 0; list-style: none; overflow: hidden; color: #000; }
.tree li { display: flex; align-items: center; gap: 5px; height: 24px; padding-left: 48px; white-space: nowrap; }
.tree .l1 { padding-left: 56px; }
.tree .l2 { padding-left: 64px; }
.tree .l3 { padding-left: 72px; }
.tree .cur { background: #d9d9d9; }
.faint svg { opacity: .6; }
.vbar { width: 17px; display: flex; flex-direction: column; align-items: center; padding: 4px 0; background: #f0f0f0; color: #444; }
.vbar i { width: 15px; }
.before { flex: 159; }
.thumb { flex: 73; background: #cdcdcd; }
.after { flex: 127; }
.files { flex: 1; min-width: 0; display: flex; flex-direction: column; }
.list { flex: 1; padding: 0 13px 0 18px; }
.files table { width: 100%; table-layout: fixed; border-collapse: separate; border-spacing: 0; color: #6d6d6d; }
.c-date { width: 144px; }
.c-type { width: 120px; }
.c-size { width: 77px; }
.files th { font-weight: 400; text-align: left; padding: 0; }
.files thead th { position: relative; height: 28px; padding-left: 6px; border-left: 1px solid #e5e5e5; color: #4c607a; }
.files thead th:first-child { padding-left: 2px; border-left-color: transparent; }
.files thead th:last-child { border-right: 1px solid #e5e5e5; }
.sorted svg { position: absolute; left: 50%; top: 0; color: #999; }
.grp div { display: flex; align-items: center; gap: 4px; height: 32px; margin: 0 -4px 0 -9px; font-size: 15px; color: #1e3287; }
.grp svg { color: #777; }
.grp div::after { content: ""; flex: 1; height: 1px; margin-left: 3px; background: #dfe3e8; }
.files td { position: relative; height: 21px; padding: 0 4px 0 7px; white-space: nowrap; }
.files td:first-child { padding: 0 0 0 4px; color: #000; }
.files td:last-child { text-align: right; }
.files td span { display: flex; align-items: center; gap: 4px; }
.sel { background: #cce8ff; outline: 1px solid #99d1ff; outline-offset: -1px; }
.hov { background: #e5f3ff; }
.tip { position: absolute; z-index: 2; left: 157px; top: 19px; width: 129px; padding: 1px 5px; border: 1px solid #767676; background: #fff; line-height: 15px; height: 50px; color: #575757; }
.hbar { display: flex; align-items: center; height: 16px; margin: 0 0 1px 4px; gap: 4px; color: #444; background: #f0f0f0; padding: 0 4px 0 3px; }
.hbar i { flex: 1; height: 15px; background: #cdcdcd; }
.status { display: flex; align-items: center; gap: 21px; height: 24px; padding-left: 14px; color: #1e395b; }
.views { margin-left: auto; display: flex; padding-right: 5px; }
.views button { width: 22px; height: 22px; }
.views .von { background: #cdeeff; border: 1px solid #3ca9c9; }

.mark { position: absolute; right: 49px; bottom: 48px; display: flex; align-items: center; gap: 7px; color: #fff; opacity: .5; font: 32px/64px Roboto, "Liberation Sans", sans-serif; }

/* taskbar */
.taskbar { display: flex; height: 40px; background: linear-gradient(90deg, #001a24, #000c1e); color: #fff; }
.start { width: 48px; }
.tb-search { width: 288px; display: flex; align-items: center; gap: 10px; padding-left: 11px; background: #f2f2f2; border: 1px solid #c4c4c4; }
.tb-search input { flex: 1; min-width: 0; padding: 0; border: 0; background: none; font-size: 13px; }
.tb-search input::placeholder { color: #333; opacity: 1; }
.app { width: 48px; margin-right: 1px; }
.task { width: 50px; }
.edge { background: linear-gradient(#76b9ed, #76b9ed) center bottom / 38px 2px no-repeat; }
.here { background: #30474f; box-shadow: inset 0 -2px #76b9ed; }
.tray { margin-left: auto; display: flex; align-items: center; gap: 8px; padding-right: 24px; }
.tray > :first-child { margin-right: 3px; }
.tray time { text-align: center; line-height: 18px; }
.note { margin-left: 9px; }
```
